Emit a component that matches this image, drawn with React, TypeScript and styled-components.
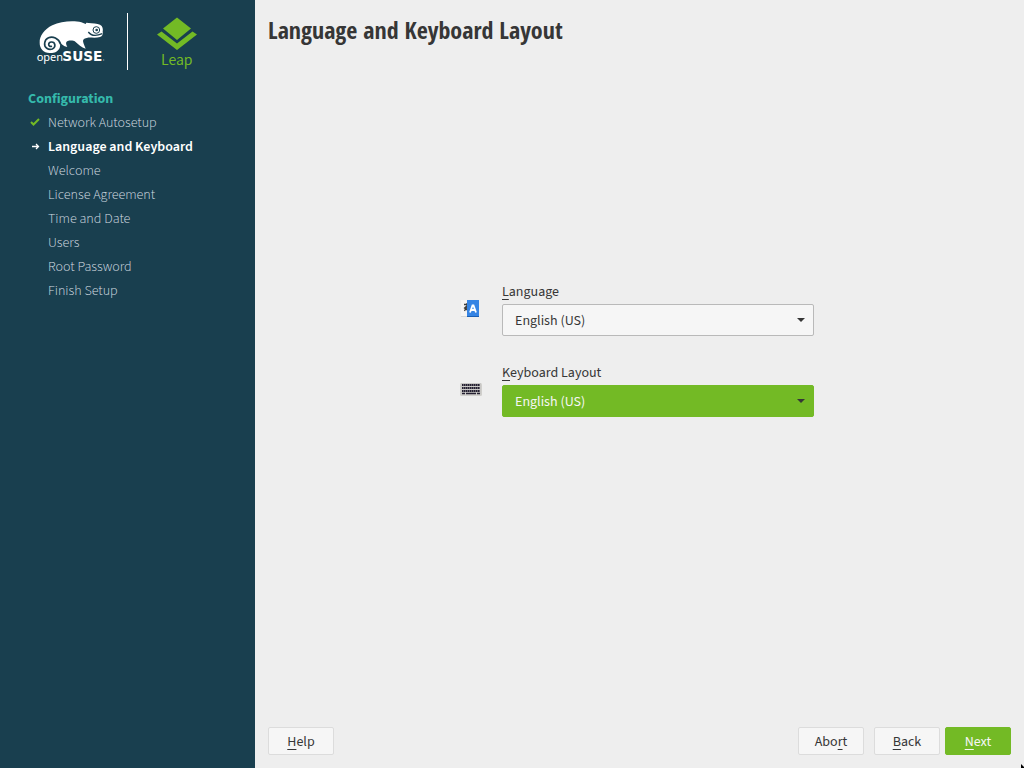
import React from "react";
import styled, { createGlobalStyle, css } from "styled-components";

const GlobalStyle = createGlobalStyle`
  *, *::before, *::after { box-sizing: border-box; }
  body {
    margin: 0;
    overflow: hidden;
    font-family: "Source Sans Pro", "Source Sans 3", "Noto Sans CJK SC", "Noto Sans", sans-serif;
    font-size: 14px;
    line-height: 24px;
    color: #363636;
    background: #eeeeee;
  }
`;

const Wizard = styled.div`
  display: flex;
  min-height: 100vh;
`;

const Sidebar = styled.aside`
  flex: 0 0 255px;
  background: #193f4f;
`;

const Branding = styled.div`
  display: flex;
  align-items: center;
  padding: 13px 0 0 34px;
  height: 70px;
`;

const Divider = styled.span`
  width: 1px;
  height: 57px;
  margin: 0 28px 0 21px;
  background: #ffffff;
`;

const Steps = styled.nav`
  padding: 17px 0 0 28px;
`;

const StepsTitle = styled.h2`
  margin: 0;
  font-size: 14px;
  font-weight: 700;
  line-height: 24px;
  color: #35b9ab;
`;

const StepList = styled.ol`
  list-style: none;
  margin: 0;
  padding: 0;
`;

const Step = styled.li<{ $active?: boolean }>`
  display: flex;
  align-items: center;
  font-weight: ${(p) => (p.$active ? 600 : 300)};
  color: ${(p) => (p.$active ? "#ffffff" : "#d3dce0")};
`;

const Marker = styled.span`
  display: flex;
  flex: 0 0 20px;
  padding: 0 0 2px 2px;
`;

const Main = styled.main`
  display: flex;
  flex: 1;
  flex-direction: column;
  padding: 13px;
`;

const Title = styled.h1`
  margin: 0;
  font-family: "Open Sans Condensed", "Noto Sans Condensed", "Liberation Sans Narrow", "Open Sans", sans-serif;
  font-size: 24px;
  font-weight: 700;
  line-height: 34px;
`;

const Content = styled.form`
  display: flex;
  flex: 1;
  flex-direction: column;
  align-items: center;
  justify-content: center;
  gap: 25px;
  padding: 0 5px 77px 0;
`;

const Field = styled.div`
  display: flex;
  align-items: center;
  gap: 20px;
`;

const FieldBody = styled.div`
  display: flex;
  flex-direction: column;
  width: 312px;
`;

const Label = styled.label`
  line-height: 24px;
`;

const Key = styled.span`
  text-decoration: underline;
  text-decoration-thickness: 1px;
  text-underline-offset: 3px;
  text-decoration-skip-ink: none;
`;

const SelectBox = styled.div`
  display: grid;
  align-items: center;

  > * { grid-area: 1 / 1; }
  > svg { justify-self: end; margin-right: 9px; pointer-events: none; }
`;

const Select = styled.select<{ $focused?: boolean }>`
  appearance: none;
  width: 100%;
  height: 32px;
  padding: 2px 12px 0;
  border: 1px solid ${(p) => (p.$focused ? "#73ba25" : "#b9b9b9")};
  border-radius: 2px;
  outline: none;
  font: inherit;
  color: ${(p) => (p.$focused ? "#f6f6f6" : "#363636")};
  background: ${(p) => (p.$focused ? "#73ba25" : "#f6f6f6")};
`;

const Footer = styled.footer`
  display: flex;
  gap: 5px;
`;

const primary = css`
  border-color: #73ba25;
  color: #f6f6f6;
  background: #73ba25;
`;

const Button = styled.button<{ $primary?: boolean }>`
  width: 66px;
  height: 28px;
  padding: 2px 0 0;
  border: 1px solid #dcdcdc;
  border-radius: 2px;
  font: inherit;
  color: #363636;
  background: #f6f6f6;
  ${(p) => p.$primary && primary}
`;

const Spacer = styled.span`
  flex: 1;
`;

const AbortButton = styled(Button)`
  margin-right: 5px;
`;

const Pointer = styled.svg`
  position: fixed;
  right: 0;
  bottom: 0;
`;

const OpenSuseLogo = () => (
  <svg width="72" height="50" viewBox="42 49 216 150" role="img" aria-label="openSUSE">
    <path
      fill="#fff"
      d="M59 126C58 106 73 86 97 74C122 62 160 59 184 65L197 70L199 66L214 68C228 69 240 71 245 76C249 82 249 88 248 93C250 99 247 107 240 109C228 113 212 110 203 111C195 112 189 115 189 121C190 129 194 136 197 144C184 140 175 130 166 123C160 119 151 119 143 121C136 124 138 131 142 139C130 137 124 131 121 124C119 128 122 134 119 142C113 154 101 158 89 157C70 156 59 144 59 126Z"
    />
    <path
      fill="none"
      stroke="#193f4f"
      strokeWidth="5"
      strokeLinecap="round"
      d="M94 137C84 139 83 125 94 124C106 123 109 140 97 145C85 149 72 141 74 127C76 112 92 105 106 112C114 116 119 122 121 129"
    />
    <circle cx="229" cy="88" r="10" fill="#fff" stroke="#193f4f" strokeWidth="3" />
    <circle cx="230" cy="88" r="4" fill="#193f4f" />
    <path fill="none" stroke="#193f4f" strokeWidth="4" d="M205 94C214 107 230 106 247 99" />
    <text x="50" y="182" fill="#fff" fontFamily="Noto Sans, sans-serif" fontSize="33">open</text>
    <text x="127" y="182" fill="#fff" fontFamily="DejaVu Sans, sans-serif" fontSize="41" fontWeight="700">SUSE</text>
    <circle cx="251" cy="178" r="2" fill="#8ea2ac" />
  </svg>
);

const LeapLogo = () => (
  <svg width="42" height="56" viewBox="0 0 42 56" role="img" aria-label="Leap">
    <path fill="#73ba25" d="M21 3.500L35 14.500L21 26L7 14.500ZM5.500 17.500L21 29.500L36.500 17.500L41 20.500L21 36L1 20.500Z" />
    <text x="5" y="51" fill="#73ba25" fontFamily="Noto Sans CJK SC, sans-serif" fontSize="14">Leap</text>
  </svg>
);

const CheckIcon = () => (
  <svg width="10" height="10" viewBox="0 0 10 10" aria-hidden="true">
    <path fill="none" stroke="#73ba25" strokeWidth="2" d="M1 5L3.500 7.500L9 2" />
  </svg>
);

const ArrowIcon = () => (
  <svg width="10" height="10" viewBox="0 0 10 10" aria-hidden="true">
    <path fill="none" stroke="#fff" strokeWidth="1.300" d="M2 5.500H8.500M6 3L8.500 5.500L6 8" />
  </svg>
);

const Chevron = () => (
  <svg width="8" height="4" viewBox="0 0 8 4" aria-hidden="true">
    <path fill="#363636" d="M0 0H8L4 4Z" />
  </svg>
);

const LanguageIcon = () => (
  <svg width="22" height="22" viewBox="-1 -2 22 22" aria-hidden="true">
    <path fill="#d7d7d5" d="M0 17H7V18H0Z" />
    <path fill="#f6f5f4" d="M0 1H7V17H0Z" />
    <path fill="none" stroke="#3d3d3d" strokeWidth="1.300" d="M3 5.500H7M3 9.500L7 6M6 4V7L3.500 12M4.500 8.500L7 12" />
    <path fill="#3584e4" d="M6 1H18V18H6Z" />
    <path fill="#1a5fb4" d="M6 17H18V18H6Z" />
    <path fill="none" stroke="#fff" strokeWidth="1.800" d="M9 13.500L11.500 6.500H12.500L15 13.500M10 11H14" />
  </svg>
);

const KeyboardIcon = () => (
  <svg width="22" height="22" viewBox="0 0 22 22" aria-hidden="true">
    <rect x="0" y="5" width="22" height="13" rx="1.500" fill="#d0cfcc" />
    <rect x="1" y="5" width="20" height="11" fill="#c9c8c6" />
    <path fill="none" stroke="#241f31" strokeWidth="2" strokeDasharray="1.600 .4" d="M2 7H20M2 10H20M2 13H20" />
    <path stroke="#241f31" strokeWidth="1.500" d="M2 15.500H5M6 15.500H16M17 15.500H20" />
  </svg>
);

const steps = [
  { name: "Network Autosetup", state: "done" },
  { name: "Language and Keyboard", state: "active" },
  { name: "Welcome" },
  { name: "License Agreement" },
  { name: "Time and Date" },
  { name: "Users" },
  { name: "Root Password" },
  { name: "Finish Setup" },
];

export default function App() {
  return (
    <>
      <GlobalStyle />
      <Wizard>
        <Sidebar>
          <Branding>
            <OpenSuseLogo />
            <Divider />
            <LeapLogo />
          </Branding>
          <Steps>
            <StepsTitle>Configuration</StepsTitle>
            <StepList>
              {steps.map(({ name, state }) => (
                <Step key={name} $active={state === "active"}>
                  <Marker>
                    {state === "done" && <CheckIcon />}
                    {state === "active" && <ArrowIcon />}
                  </Marker>
                  {name}
                </Step>
              ))}
            </StepList>
          </Steps>
        </Sidebar>
        <Main>
          <Title>Language and Keyboard Layout</Title>
          <Content id="locale">
            <Field>
              <LanguageIcon />
              <FieldBody>
                <Label htmlFor="language"><Key>L</Key>anguage</Label>
                <SelectBox>
                  <Select id="language"><option>English (US)</option></Select>
                  <Chevron />
                </SelectBox>
              </FieldBody>
            </Field>
            <Field>
              <KeyboardIcon />
              <FieldBody>
                <Label htmlFor="keyboard"><Key>K</Key>eyboard Layout</Label>
                <SelectBox>
                  <Select id="keyboard" $focused><option>English (US)</option></Select>
                  <Chevron />
                </SelectBox>
              </FieldBody>
            </Field>
          </Content>
          <Footer>
            <Button type="button"><Key>H</Key>elp</Button>
            <Spacer />
            <AbortButton type="button">Abo<Key>r</Key>t</AbortButton>
            <Button type="button"><Key>B</Key>ack</Button>
            <Button type="submit" form="locale" $primary><Key>N</Key>ext</Button>
          </Footer>
        </Main>
      </Wizard>
      <Pointer width="4" height="4" viewBox="0 0 4 4" aria-hidden="true">
        <path d="M1 0L4 3V4H1Z" fill="#000" />
      </Pointer>
    </>
  );
}
